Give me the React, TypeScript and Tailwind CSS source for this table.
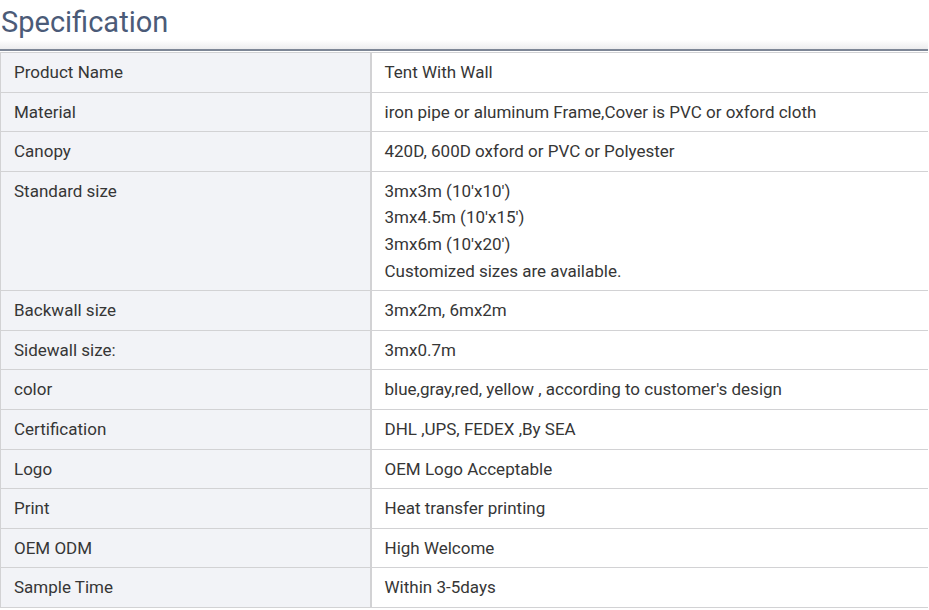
const rows: { label: string; value: string[] }[] = [
  { label: 'Product Name', value: ['Tent With Wall'] },
  { label: 'Material', value: ['iron pipe or aluminum Frame,Cover is PVC or oxford cloth'] },
  { label: 'Canopy', value: ['420D, 600D oxford or PVC or Polyester'] },
  {
    label: 'Standard size',
    value: ["3mx3m (10'x10')", "3mx4.5m (10'x15')", "3mx6m (10'x20')", 'Customized sizes are available.'],
  },
  { label: 'Backwall size', value: ['3mx2m, 6mx2m'] },
  { label: 'Sidewall size:', value: ['3mx0.7m'] },
  { label: 'color', value: ["blue,gray,red, yellow , according to customer's design"] },
  { label: 'Certification', value: ['DHL ,UPS, FEDEX ,By SEA'] },
  { label: 'Logo', value: ['OEM Logo Acceptable'] },
  { label: 'Print', value: ['Heat transfer printing'] },
  { label: 'OEM ODM', value: ['High Welcome'] },
  { label: 'Sample Time', value: ['Within 3-5days'] },
];

export default function App() {
  return (
    <div className="w-[928px] bg-white font-['Roboto',sans-serif] text-[#363636]">
      {/* heading */}
      <h2 className="h-[40px] pl-[1px] text-[29px] leading-[44px] text-[#4b5b78]">Specification</h2>
      <div className="h-[9px] bg-gradient-to-b from-white to-[#ececee]" />
      <div className="h-[2px] bg-[#7d8696]" />
      <div className="h-[1px] bg-white" />

      <table className="w-full border-collapse text-[17px] leading-[26.6px]">
        <tbody>
          {rows.map((r) => (
            <tr key={r.label} className="border-y border-[#d2d2d4]">
              <td className="w-[370px] border-l border-r-2 border-[#d2d2d4] bg-[#f2f3f7] px-[13px] py-[6px] align-top">
                {r.label}
              </td>
              <td className="px-[13px] py-[6px] align-top">
                {r.value.map((v) => (
                  <div key={v}>{v}</div>
                ))}
              </td>
            </tr>
          ))}
        </tbody>
      </table>
    </div>
  );
}
